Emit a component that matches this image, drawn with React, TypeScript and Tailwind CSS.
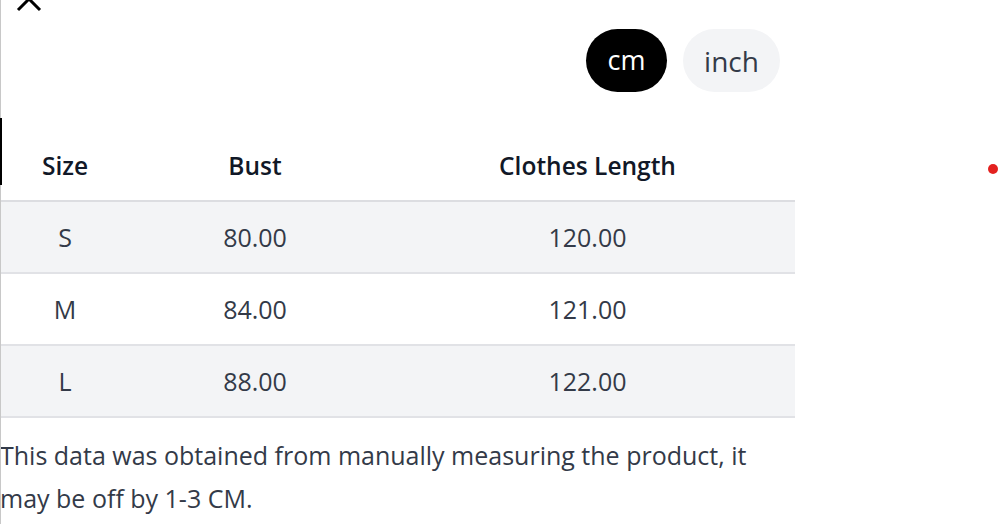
import React from "react";

const rows = [
  { size: "S", bust: "80.00", len: "120.00", bg: "bg-[#f3f4f6]" },
  { size: "M", bust: "84.00", len: "121.00", bg: "bg-white" },
  { size: "L", bust: "88.00", len: "122.00", bg: "bg-[#f3f4f6]" },
];

export default function App() {
  return (
    <div
      className="relative w-[1000px] h-[524px] overflow-hidden bg-white text-[#333a48]"
      style={{ fontFamily: '"Open Sans", "Noto Sans", sans-serif' }}
    >
      <div className="absolute left-0 top-0 h-full w-px bg-[#c8c8c8]" />
      <div className="absolute left-0 top-[118px] h-[67px] w-[2px] bg-black" />
      <div className="absolute left-[988px] top-[164px] h-[10px] w-[10px] rounded-full bg-[#e3211f]" />
      <div className="w-[795px]">
        <div className="h-[12px] relative">
          <svg
            className="absolute left-[15px] top-[-12px]"
            width="28"
            height="28"
            viewBox="0 0 28 28"
            fill="none"
            stroke="black"
            strokeWidth="3"
          >
            <path d="M3 22 L14 11 L25 22" />
          </svg>
        </div>
        <div className="flex justify-end gap-[16px] pr-[15px] pt-[17px]">
          <button className="h-[63px] w-[81px] rounded-full bg-black text-white text-[27px]">cm</button>
          <button className="h-[63px] w-[97px] rounded-full bg-[#f3f4f6] text-[#333a48] text-[28px]">inch</button>
        </div>
        <table className="mt-[37px] w-[795px] border-collapse">
          <thead>
            <tr className="h-[72px] border-b-2 border-[#dcdde1] text-[24.5px]">
              <th className="w-[130px] pt-[3px] font-semibold text-[#111827]">Size</th>
              <th className="w-[250px] pt-[3px] font-semibold text-[#111827]">Bust</th>
              <th className="pt-[3px] font-semibold text-[#111827]">Clothes Length</th>
            </tr>
          </thead>
          <tbody>
            {rows.map((r) => (
              <tr key={r.size} className={`h-[72px] border-b-2 border-[#e1e2e6] text-[25px] ${r.bg}`}>
                <td className="text-center pt-[2px]">{r.size}</td>
                <td className="text-center pt-[2px]">{r.bust}</td>
                <td className="text-center pt-[2px]">{r.len}</td>
              </tr>
            ))}
          </tbody>
        </table>
        <p className="mt-[16px] text-[25px] leading-[43px] w-[770px]">
          This data was obtained from manually measuring the product, it may be off by 1-3 CM.
        </p>
      </div>
    </div>
  );
}
